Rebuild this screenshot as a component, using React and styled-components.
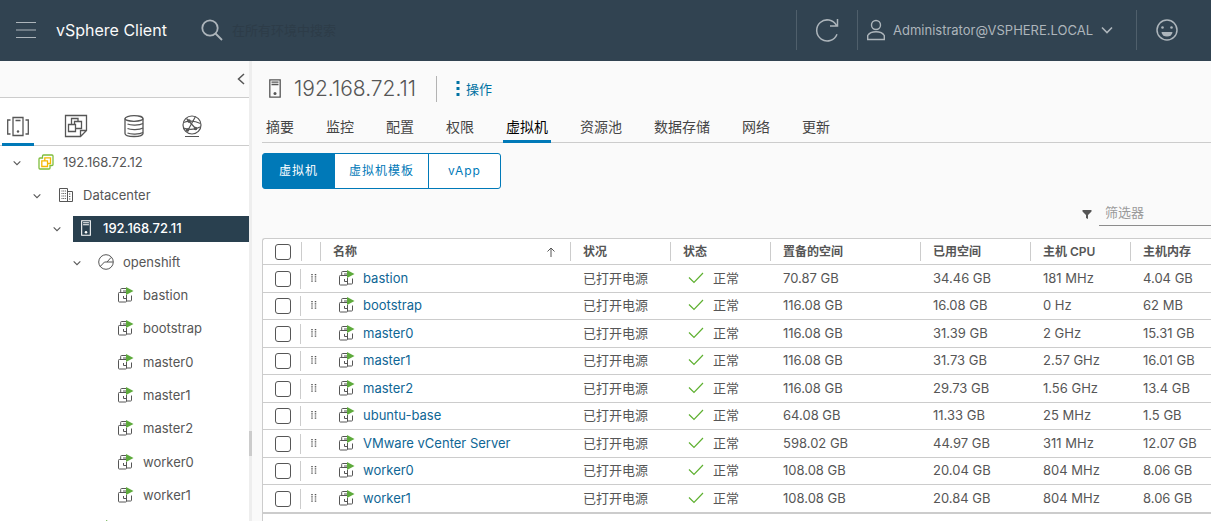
import React from "react";
import styled, { createGlobalStyle } from "styled-components";

const treeItems = [
  { name: "192.168.72.12", depth: 0, icon: "vcenter", open: true },
  { name: "Datacenter", depth: 1, icon: "datacenter", open: true },
  { name: "192.168.72.11", depth: 2, icon: "host", open: true, selected: true },
  { name: "openshift", depth: 3, icon: "pool", open: true },
  { name: "bastion", depth: 4, icon: "vm" },
  { name: "bootstrap", depth: 4, icon: "vm" },
  { name: "master0", depth: 4, icon: "vm" },
  { name: "master1", depth: 4, icon: "vm" },
  { name: "master2", depth: 4, icon: "vm" },
  { name: "worker0", depth: 4, icon: "vm" },
  { name: "worker1", depth: 4, icon: "vm" },
  { name: "", depth: 3, icon: "vm" },
];

const tabs = ["摘要", "监控", "配置", "权限", "虚拟机", "资源池", "数据存储", "网络", "更新"];

const machines = [
  ["bastion", "70.87 GB", "34.46 GB", "181 MHz", "4.04 GB"],
  ["bootstrap", "116.08 GB", "16.08 GB", "0 Hz", "62 MB"],
  ["master0", "116.08 GB", "31.39 GB", "2 GHz", "15.31 GB"],
  ["master1", "116.08 GB", "31.73 GB", "2.57 GHz", "16.01 GB"],
  ["master2", "116.08 GB", "29.73 GB", "1.56 GHz", "13.4 GB"],
  ["ubuntu-base", "64.08 GB", "11.33 GB", "25 MHz", "1.5 GB"],
  ["VMware vCenter Server", "598.02 GB", "44.97 GB", "311 MHz", "12.07 GB"],
  ["worker0", "108.08 GB", "20.04 GB", "804 MHz", "8.06 GB"],
  ["worker1", "108.08 GB", "20.84 GB", "804 MHz", "8.06 GB"],
];

const MenuIcon = () => (
  <Icon width="20" height="16" viewBox="0 0 20 16">
    <path d="M0 .5h20M0 8h20M0 15.500h20" />
  </Icon>
);

const SearchIcon = () => (
  <Icon width="22" height="22" viewBox="0 0 22 22" $stroke={1.8}>
    <circle cx="9" cy="9" r="7.7" />
    <path d="M14.500 14.500L21 21" />
  </Icon>
);

const RefreshIcon = () => (
  <Icon width="24" height="24" viewBox="0 0 24 24" $stroke={1.5}>
    <path d="M22 16.200A10.500 10.500 0 1 1 21.500 7.500M22.500 1v7h-7.500" />
  </Icon>
);

const UserIcon = () => (
  <Icon width="18" height="22" viewBox="0 0 18 22" $stroke={1.4}>
    <circle cx="9" cy="6" r="4.500" />
    <path d="M.7 20.500v-4c1.500-2.500 4.500-3.800 8.300-3.800s6.800 1.300 8.300 3.800v4z" />
  </Icon>
);

const SmileIcon = () => (
  <Icon width="22" height="22" viewBox="0 0 22 22" $stroke={1.5}>
    <circle cx="11" cy="11" r="10" />
    <circle cx="6.500" cy="8.500" r="1.300" fill="currentColor" stroke="none" />
    <circle cx="15.500" cy="8.500" r="1.300" fill="currentColor" stroke="none" />
    <path d="M5.500 13h11a5.500 4.500 0 0 1-11 0z" fill="currentColor" stroke="none" />
  </Icon>
);

const ChevronIcon = ({ size = 8 }) => (
  <Icon width={size} height={size} viewBox="0 0 12 12" $stroke={1.6}>
    <path d="M1 3.500l5 5 5-5" />
  </Icon>
);

const CollapseIcon = () => (
  <Icon width="8" height="12" viewBox="0 0 8 12" $stroke={1.5}>
    <path d="M7 1L1.500 6L7 11" />
  </Icon>
);

const HostsIcon = () => (
  <Icon width="24" height="22" viewBox="0 0 24 22" $stroke={1.3}>
    <path d="M7 2.500h10v18H7zM9.500 5.500h5M4.500 5H1.700v14h2.800M19.500 5h2.800v14h-2.800" />
    <circle cx="12" cy="16.500" r="1.200" fill="currentColor" stroke="none" />
  </Icon>
);

const TemplatesIcon = () => (
  <Icon width="24" height="24" viewBox="0 0 24 24" $stroke={1.3}>
    <path d="M1.500 1.500h21v15l-6 6h-15zM16.500 22.500v-6h6" />
    <path d="M4.500 10.500h7v7h-7zM7.500 10.500v-6h6.500v3M11.500 14.500h6v-7h-7v3" />
  </Icon>
);

const StorageIcon = () => (
  <Icon width="22" height="24" viewBox="0 0 22 24" $stroke={1.3}>
    <ellipse cx="11" cy="4.500" rx="9" ry="2.800" />
    <path d="M2 4.500v15c0 4 18 4 18 0v-15" />
    <path d="M4.500 10c3 1.500 12 1.500 15.500-.500M4.500 14.500c3 1.500 12 1.500 15.500-.500M4.500 19c3 1.500 12 1.500 15.500-.500" />
  </Icon>
);

const NetworkIcon = () => (
  <Icon width="22" height="24" viewBox="0 0 22 24" $stroke={1.2}>
    <circle cx="11" cy="11" r="9" />
    <path d="M4 22.500h14M2.500 8.500c5-2 11-2 17 1M5.500 4.500l10 11M14.500 2.500L6.500 17M2.500 14c5 2 11 2 16.500-1" />
    <circle cx="8" cy="7" r="1.200" fill="currentColor" />
    <circle cx="6.500" cy="16" r="1.200" fill="currentColor" />
    <circle cx="14.500" cy="14.500" r="1.200" fill="currentColor" />
  </Icon>
);

const VcenterIcon = () => (
  <Icon width="16" height="16" viewBox="0 0 16 16" $stroke={1.3}>
    <path
      d="M4.500 4V2q0-1 1-1h8.500q1 0 1 1v8.500q0 1-1 1h-2V14q0 1-1 1H2q-1 0-1-1V5q0-1 1-1z"
      stroke="#7fbd3c"
    />
    <path d="M3.800 6.800h5.700v5.700H3.800zM6.800 6.800V3.800h5.700v5.700h-3" stroke="#f5b800" />
  </Icon>
);

const DatacenterIcon = () => (
  <Icon width="14" height="16" viewBox="0 0 14 16">
    <path d="M.5 14.500V1.500h8v13M8.500 4.500h5v10H.5" />
    <path
      d="M2.500 4h4.500M2.500 6.500h4.500M2.500 9h4.500M2.500 11.500h4.500M10 7h2M10 9.500h2M10 12h2"
      strokeDasharray="1 .7"
    />
  </Icon>
);

const HostIcon = ({ large }) => (
  <Icon width={large ? 12 : 10} height={large ? 19 : 16} viewBox="0 0 12 19" $stroke={1.3}>
    <path d="M.8.8h10.400v17.400H.8z" />
    <path d="M2.500 3.200h7M2.500 5.500h7" />
    <circle cx="6" cy="14.500" r="1.500" fill="currentColor" stroke="none" />
  </Icon>
);

const PoolIcon = () => (
  <Icon width="16" height="16" viewBox="0 0 16 16">
    <circle cx="8" cy="8" r="7.300" />
    <path d="M2.200 12.500L6.500 8h8.500M9 8l4-4.500" />
  </Icon>
);

const VmIcon = () => (
  <Icon width="16" height="16" viewBox="0 0 16 16">
    <path d="M8 1.500H3.500q-.8 0-.8.800V5M5 4h3" />
    <path d="M8 5.500H1.300q-.8 0-.8.800v7.900q0 .8.800.8h6.400q.8 0 .8-.8V8" />
    <path d="M5.500 9v2.500h3M8.500 14h4.200q.8 0 .8-.8V8.500" />
    <path d="M8 0l7.500 4-7.500 4z" fill="#5eaa3c" stroke="none" />
  </Icon>
);

const CheckIcon = () => (
  <Icon width="16" height="12" viewBox="0 0 16 12" $stroke={1.2}>
    <path d="M1 5.500l5 5L15 1" />
  </Icon>
);

const SortIcon = () => (
  <Icon width="8" height="10" viewBox="0 0 8 10">
    <path d="M4 10V1M.5 4.500L4 1l3.500 3.500" />
  </Icon>
);

const FilterIcon = () => (
  <Icon width="10" height="9" viewBox="0 0 10 9">
    <path d="M.5 0h9v1.500L6 5v4L4 8V5L.5 1.500z" fill="currentColor" stroke="none" />
  </Icon>
);

const GripIcon = () => (
  <Icon width="6" height="8" viewBox="0 0 6 8">
    <path d="M1 0v8M4.500 0v8" strokeDasharray="1.200 1" strokeWidth="1.500" />
  </Icon>
);

const MoreIcon = () => (
  <Icon width="4" height="15" viewBox="0 0 4 15">
    <path d="M.5 0h3v3h-3zM.5 6h3v3h-3zM.5 12h3v3h-3z" fill="currentColor" stroke="none" />
  </Icon>
);

const treeIcons = {
  vcenter: VcenterIcon,
  datacenter: DatacenterIcon,
  host: HostIcon,
  pool: PoolIcon,
  vm: VmIcon,
};

const Header = () => (
  <StyledHeader>
    <MenuButton aria-label="菜单">
      <MenuIcon />
    </MenuButton>
    <Brand href="#">vSphere Client</Brand>
    <HeaderButton aria-label="搜索">
      <SearchIcon />
    </HeaderButton>
    <SearchInput type="text" placeholder="在所有环境中搜索" aria-label="搜索" />
    <HeaderTools>
      <ToolSection>
        <HeaderButton aria-label="刷新">
          <RefreshIcon />
        </HeaderButton>
      </ToolSection>
      <UserSection>
        <HeaderButton>
          <UserIcon />
          Administrator@VSPHERE.LOCAL
          <ChevronIcon size={12} />
        </HeaderButton>
      </UserSection>
      <FeedbackSection>
        <HeaderButton aria-label="反馈">
          <SmileIcon />
        </HeaderButton>
      </FeedbackSection>
    </HeaderTools>
  </StyledHeader>
);

const Sidebar = () => (
  <StyledSidebar>
    <CollapseBar>
      <PlainButton aria-label="折叠">
        <CollapseIcon />
      </PlainButton>
    </CollapseBar>
    <InventoryTabs>
      <InventoryTab $active aria-label="主机和群集">
        <HostsIcon />
      </InventoryTab>
      <InventoryTab aria-label="虚拟机和模板">
        <TemplatesIcon />
      </InventoryTab>
      <InventoryTab aria-label="存储">
        <StorageIcon />
      </InventoryTab>
      <InventoryTab aria-label="网络">
        <NetworkIcon />
      </InventoryTab>
    </InventoryTabs>
    <Tree>
      {treeItems.map((item, index) => {
        const ItemIcon = treeIcons[item.icon];
        return (
          <TreeRow key={index} $depth={item.depth}>
            <Toggle aria-label="展开">{item.open && <ChevronIcon />}</Toggle>
            <TreeLink href="#" $selected={item.selected}>
              <TreeIcon>
                <ItemIcon />
              </TreeIcon>
              {item.name}
            </TreeLink>
          </TreeRow>
        );
      })}
    </Tree>
  </StyledSidebar>
);

const MachineTable = () => (
  <Table>
    <colgroup>
      <Column $width={39} />
      <Column $width={19} />
      <Column $width={250} />
      <Column $width={100} />
      <Column $width={100} />
      <Column $width={150} />
      <Column $width={110} />
      <Column $width={100} />
      <Column />
    </colgroup>
    <thead>
      <tr>
        <HeadCell>
          <HeadInner>
            <Checkbox type="checkbox" aria-label="全选" />
          </HeadInner>
        </HeadCell>
        <HeadCell>
          <HeadInner />
        </HeadCell>
        <HeadCell>
          <HeadInner>
            名称
            <SortIcon />
          </HeadInner>
        </HeadCell>
        {["状况", "状态", "置备的空间", "已用空间", "主机 CPU", "主机内存"].map((label) => (
          <HeadCell key={label}>
            <HeadInner>{label}</HeadInner>
          </HeadCell>
        ))}
      </tr>
    </thead>
    <tbody>
      {machines.map(([name, ...values]) => (
        <BodyRow key={name}>
          <Cell>
            <CheckInner>
              <Checkbox type="checkbox" aria-label={name} />
            </CheckInner>
          </Cell>
          <Cell>
            <GripInner>
              <GripIcon />
            </GripInner>
          </Cell>
          <Cell>
            <IconInner>
              <VmIcon />
              <NameLink href="#">{name}</NameLink>
            </IconInner>
          </Cell>
          <Cell>
            <CellInner>已打开电源</CellInner>
          </Cell>
          <Cell>
            <StateInner>
              <CheckIcon />
              <span>正常</span>
            </StateInner>
          </Cell>
          {values.map((value, index) => (
            <Cell key={index}>
              <CellInner>{value}</CellInner>
            </Cell>
          ))}
        </BodyRow>
      ))}
    </tbody>
  </Table>
);

const App = () => {
  return (
    <Page>
      <GlobalStyle />
      <Header />
      <Body>
        <Sidebar />
        <Splitter>
          <SplitterHandle />
        </Splitter>
        <Main>
          <TitleRow>
            <HostIcon large />
            <Title>192.168.72.11</Title>
            <ActionsButton>
              <MoreIcon />
              操作
            </ActionsButton>
          </TitleRow>
          <TabList>
            {tabs.map((tab) => (
              <Tab key={tab} href="#" $active={tab === "虚拟机"}>
                {tab}
              </Tab>
            ))}
          </TabList>
          <ButtonGroup>
            <GroupButton $active>虚拟机</GroupButton>
            <GroupButton>虚拟机模板</GroupButton>
            <GroupButton>vApp</GroupButton>
          </ButtonGroup>
          <FilterRow>
            <FilterIcon />
            <FilterInput type="text" placeholder="筛选器" aria-label="筛选器" />
          </FilterRow>
          <MachineTable />
          <GridFooter />
        </Main>
      </Body>
    </Page>
  );
};

const GlobalStyle = createGlobalStyle`
  * {
    box-sizing: border-box;
  }

  body {
    margin: 0;
    color: #565656;
    font-family: Inter, "Noto Sans CJK SC", sans-serif;
    font-size: 13px;
    line-height: 20px;
  }

  button,
  input {
    font: inherit;
  }

  a {
    color: inherit;
    text-decoration: none;
  }
`;

const Icon = styled.svg`
  flex: none;
  fill: none;
  stroke: currentColor;
  stroke-width: ${({ $stroke }) => $stroke || 1};
`;

const Page = styled.div`
  display: flex;
  flex-direction: column;
  height: 100vh;
  overflow: hidden;
  background: #fafafa;
`;

const PlainButton = styled.button`
  display: flex;
  align-items: center;
  padding: 0;
  border: 0;
  background: none;
  color: inherit;
  cursor: pointer;
`;

const StyledHeader = styled.header`
  display: flex;
  flex: none;
  align-items: center;
  height: 61px;
  padding: 0 0 2px 16px;
  background: #314351;
  color: #adb5bb;
`;

const HeaderButton = styled(PlainButton)`
  gap: 8px;
`;

const MenuButton = styled(PlainButton)`
  margin-right: 20px;
`;

const Brand = styled.a`
  margin-right: 34px;
  color: #fafafa;
  font-size: 16px;
`;

const SearchInput = styled.input`
  width: 160px;
  height: 24px;
  margin-left: 9px;
  padding: 0;
  border: 0;
  background: none;
  color: #fafafa;
  outline: none;

  &::placeholder {
    color: #2d3c48;
  }
`;

const HeaderTools = styled.div`
  display: flex;
  margin-left: auto;
`;

const ToolSection = styled.div`
  display: flex;
  align-items: center;
  width: 61px;
  height: 40px;
  padding-left: 18px;
  border-left: 1px solid #4f5f6b;
`;

const UserSection = styled(ToolSection)`
  width: 279px;
  padding-left: 9px;
`;

const FeedbackSection = styled(ToolSection)`
  width: 75px;
  padding-left: 19px;
`;

const Body = styled.div`
  display: flex;
  flex: 1;
  min-height: 0;
`;

const StyledSidebar = styled.aside`
  flex: none;
  width: 249px;
  overflow: hidden;
  background: #fff;
`;

const CollapseBar = styled.div`
  display: flex;
  justify-content: flex-end;
  height: 37px;
  padding-right: 4px;
  border-bottom: 1px solid #ccc;
  background: #fafafa;
`;

const InventoryTabs = styled.div`
  display: flex;
  gap: 26px;
  height: 48px;
  padding-left: 2px;
  box-shadow: inset 0 -1px #ccc;
`;

const InventoryTab = styled(PlainButton)`
  justify-content: center;
  width: 32px;
  padding-top: 8px;
  box-shadow: ${({ $active }) => ($active ? "inset 0 -3px #0079b8" : "none")};
`;

const Tree = styled.ul`
  margin: 0;
  padding: 0;
  list-style: none;
`;

const TreeRow = styled.li`
  display: flex;
  align-items: center;
  height: 33px;
  padding-left: ${({ $depth }) => $depth * 20 + 13}px;

  &:nth-child(3n) {
    height: 34px;
  }
`;

const Toggle = styled(PlainButton)`
  width: 20px;
  height: 20px;
`;

const TreeLink = styled.a`
  display: flex;
  flex: 1;
  align-items: center;
  gap: 4px;
  height: 26px;
  padding-bottom: 2px;
  background: ${({ $selected }) => ($selected ? "#29404f" : "none")};
  color: ${({ $selected }) => ($selected ? "#fff" : "#565656")};
  font-weight: ${({ $selected }) => ($selected ? 500 : 400)};
`;

const TreeIcon = styled.span`
  display: flex;
  justify-content: center;
  width: 26px;
`;

const Splitter = styled.div`
  display: flex;
  flex: none;
  align-items: flex-end;
  width: 3px;
  padding-bottom: 65px;
  background: #eee;
`;

const SplitterHandle = styled.div`
  width: 3px;
  height: 25px;
  background: #ccc;
`;

const Main = styled.main`
  display: flex;
  flex: 1;
  flex-direction: column;
  min-width: 0;
  padding-left: 10px;
`;

const TitleRow = styled.div`
  display: flex;
  flex: none;
  align-items: center;
  height: 55px;
  padding-left: 7px;
`;

const Title = styled.h1`
  margin: 0 20px 0 13px;
  font-size: 21px;
  font-weight: 300;
`;

const ActionsButton = styled(PlainButton)`
  gap: 6px;
  height: 26px;
  padding-left: 19px;
  border-left: 1px solid #b3b3b3;
  color: #0072a3;
`;

const TabList = styled.nav`
  display: flex;
  flex: none;
  gap: 26px;
  height: 27px;
  padding-left: 1px;
  box-shadow: inset 0 -1px #ccc;
`;

const Tab = styled.a`
  padding: 1px 3px 0;
  box-shadow: ${({ $active }) => ($active ? "inset 0 -3px #0079b8" : "none")};
  color: ${({ $active }) => ($active ? "#000" : "#454545")};
  font-size: 14px;
`;

const ButtonGroup = styled.div`
  display: flex;
  flex: none;
  margin-top: 10px;
`;

const GroupButton = styled.button`
  min-width: 73px;
  height: 36px;
  margin-right: -1px;
  padding: 0 14px;
  border: 1px solid #0079b8;
  background: ${({ $active }) => ($active ? "#0079b8" : "#fff")};
  color: ${({ $active }) => ($active ? "#fff" : "#0079b8")};
  font-size: 12px;
  letter-spacing: 1px;

  &:first-child {
    border-radius: 3px 0 0 3px;
  }

  &:last-child {
    border-radius: 0 3px 3px 0;
  }
`;

const FilterRow = styled.div`
  display: flex;
  flex: none;
  align-items: center;
  justify-content: flex-end;
  gap: 7px;
  margin: 13px 0 12px;
`;

const FilterInput = styled.input`
  width: 112px;
  height: 24px;
  padding: 0 6px 4px;
  border: 0;
  border-bottom: 1px solid #8c8c8c;
  background: none;
  outline: none;

  &::placeholder {
    color: #9a9a9a;
  }
`;

const Table = styled.table`
  flex: none;
  width: 100%;
  table-layout: fixed;
  border-spacing: 0;
  border-top: 1px solid #ccc;
  border-left: 1px solid #ccc;
  border-bottom: 1px solid #ccc;
  border-top-left-radius: 3px;
  background: #fff;
`;

const Column = styled.col`
  width: ${({ $width }) => ($width ? `${$width}px` : "auto")};
`;

const HeadCell = styled.th`
  height: 26px;
  padding: 0;
  border-bottom: 1px solid #ccc;
  font-size: 12px;
  font-weight: 600;
`;

const HeadInner = styled.div`
  display: flex;
  align-items: center;
  justify-content: space-between;
  height: 19px;
  padding: 0 15px 0 12px;
  border-right: 1px solid #ccc;
  white-space: nowrap;

  ${HeadCell}:first-child > & {
    padding-right: 0;
  }

  ${HeadCell}:nth-child(2) > & {
    padding: 0;
  }

  ${HeadCell}:last-child > & {
    border-right: 0;
  }
`;

const BodyRow = styled.tr`
  height: 27px;

  &:nth-child(odd) {
    height: 28px;
  }
`;

const Cell = styled.td`
  padding: 0;
  border-bottom: 1px solid #ccc;
`;

const CellInner = styled.div`
  display: flex;
  align-items: center;
  height: 20px;
  padding: 0 0 2px 12px;
  white-space: nowrap;
`;

const CheckInner = styled(CellInner)`
  width: 38px;
  padding-bottom: 0;
  border-right: 1px solid #ccc;
`;

const GripInner = styled(CellInner)`
  padding-left: 9px;
`;

const IconInner = styled(CellInner)`
  gap: 8px;
  padding-left: 18px;
`;

const StateInner = styled(IconInner)`
  gap: 9px;
  padding-left: 17px;

  & > svg {
    color: #5eb030;
  }
`;

const NameLink = styled.a`
  color: #0f6695;
`;

const Checkbox = styled.input`
  flex: none;
  width: 16px;
  height: 16px;
  margin: 0;
  appearance: none;
  border: 1px solid #565656;
  border-radius: 3px;
  background: #fff;

  &:checked {
    background: #0079b8;
  }
`;

const GridFooter = styled.div`
  flex: 1;
  border-left: 1px solid #ccc;
  background: #fff;
`;

export default App;
